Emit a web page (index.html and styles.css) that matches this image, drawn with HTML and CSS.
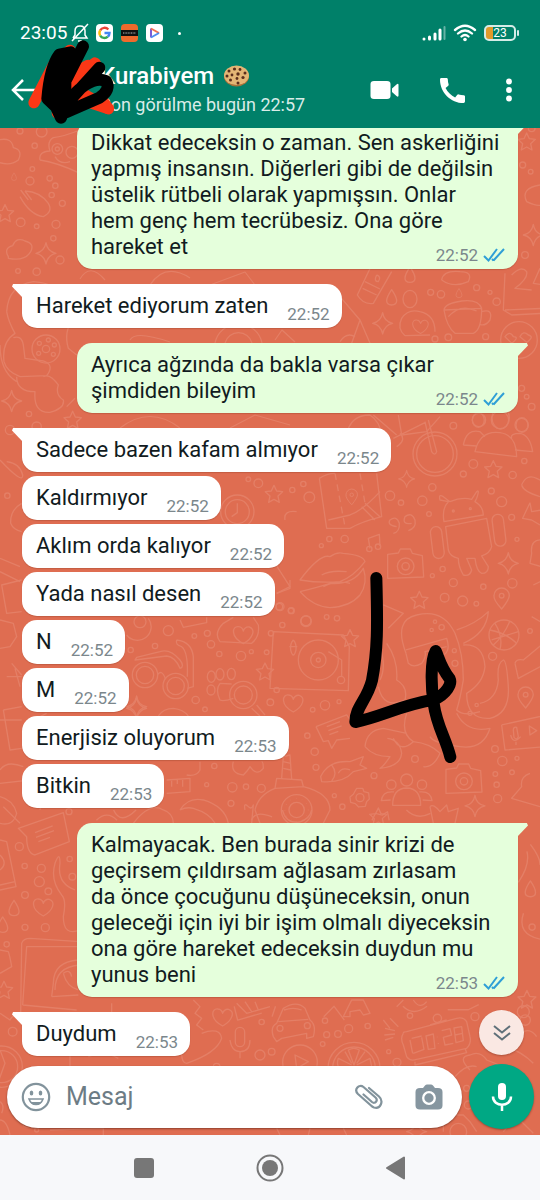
FILE: index.html
```
<!DOCTYPE html>
<html lang="tr">
<head>
<meta charset="utf-8" />
<meta name="viewport" content="width=device-width, initial-scale=1" />
<title>Kurabiyem</title>
<link rel="stylesheet" href="styles.css">
</head>

<body>
<header class="ust">
    <div class="durum">
        <span class="saat">23:05</span>
        <svg class="zil" width="18" height="20" viewBox="0 0 18 20"><path d="M2 15H16L14 12V8Q14 3 9 3Q4 3 4 8V12L2 15M1 18L17 1M7 18H11" /></svg>
        <svg class="app" width="17" height="18" viewBox="0 0 17 18"><rect width="17" height="18" rx="4" fill="#fff" /><g fill="none" stroke-width="2.400"><path d="M12.300 5.500A5 5 0 0 0 4.200 6.400" stroke="#ea4335" /><path d="M4.200 6.400A5 5 0 0 0 4.200 11.600" stroke="#fbbc05" /><path d="M4.200 11.600A5 5 0 0 0 11.800 12.700" stroke="#34a853" /><path d="M11.800 12.700A5 5 0 0 0 13.500 9H8.500" stroke="#4285f4" /></g></svg>
        <svg class="app" width="17" height="18" viewBox="0 0 17 18"><rect width="17" height="18" rx="4" fill="#ef6a2c" /><rect y="6" width="17" height="6" fill="#111" /><path d="M2 9H15" stroke="#bbb" stroke-dasharray="1 .6" /></svg>
        <svg class="app" width="17" height="18" viewBox="0 0 17 18"><rect width="17" height="18" rx="4" fill="#fff" /><g fill="none" stroke-width="2" stroke-linejoin="round"><path d="M5 13.500V4.500" stroke="#7c5cd6" /><path d="M5 4.500L13 9" stroke="#f0704f" /><path d="M13 9L5 13.500" stroke="#4f8df0" /></g></svg>
        <i class="nokta"></i>
        <svg class="sinyal" width="24" height="16" viewBox="0 0 24 16"><g stroke="#fff" stroke-width="3" stroke-linecap="round"><path d="M2 14V14M7.500 14V12M13 14V9M18 14V5" /><path d="M22.500 14V2" stroke-width="2" opacity=".4" /></g></svg>
        <svg class="wifi" width="24" height="18" viewBox="0 0 24 18"><g fill="none" stroke="#fff" stroke-width="2.300" stroke-linecap="round"><path d="M2 6Q12 -2.500 22 6M5 9.500Q12 3.500 19 9.500M8.500 12.500Q12 9.500 15.500 12.500" /></g><circle cx="12" cy="15.500" r="1.800" fill="#fff" /></svg>
        <div class="pil"><span>23</span></div>
    </div>
    <div class="baslik">
        <button class="geri" aria-label="Geri"><svg width="24" height="24" viewBox="0 0 24 24"><path d="M24 12H2M12 2L2 12L12 22" fill="none" stroke="#fff" stroke-width="2.500" /></svg></button>
        <div class="kisi">
            <h1>Kurabiyem
            <svg width="27" height="22" viewBox="0 0 27 22"><ellipse cx="13.500" cy="11.500" rx="12.500" ry="10" fill="#a9713a" /><ellipse cx="13.500" cy="10.300" rx="12.500" ry="9.700" fill="#e3b575" /><g fill="#5a2d1c"><circle cx="6" cy="6" r="1.500" /><circle cx="11.500" cy="4" r="1.600" /><circle cx="17" cy="4.500" r="1.400" /><circle cx="22" cy="8" r="1.500" /><circle cx="15" cy="9" r="1.700" /><circle cx="9" cy="10" r="1.400" /><circle cx="4" cy="11" r="1.500" /><circle cx="20" cy="12.500" r="1.600" /><circle cx="7.500" cy="15" r="1.500" /><circle cx="14" cy="13.500" r="1.400" /><circle cx="15" cy="18" r="1.500" /></g></svg></h1>
            <p>Son görülme bugün 22:57</p>
        </div>
        <div class="islem">
            <button aria-label="Görüntülü ara"><svg width="29" height="20" viewBox="0 0 29 20"><path d="M4 1H17Q20.500 1 20.500 4V16Q20.500 19 17 19H4Q.5 19 .5 16V4Q.5 1 4 1ZM22 8.500L26.500 4.500Q28.500 3 28.500 5V15.500Q28.500 17.500 26.500 16L22 12Z" fill="#fff" /></svg></button>
            <button aria-label="Sesli ara"><svg width="25" height="25" viewBox="3 3 18 18"><path d="M20.010 15.380c-1.230 0-2.420-.2-3.530-.56a.977.977 0 0 0-1.010.24l-1.570 1.970c-2.830-1.350-5.480-3.900-6.890-6.830l1.950-1.660c.27-.28.35-.67.240-1.020-.37-1.110-.56-2.300-.56-3.530 0-.54-.45-.99-.99-.99H4.190C3.650 3 3 3.240 3 3.990 3 13.280 10.730 21 20.010 21c.71 0 .99-.63.99-1.180v-3.450c0-.54-.45-.99-.99-.99z" fill="#fff" /></svg></button>
            <button aria-label="Menü"><svg width="6" height="24" viewBox="0 0 6 24"><g fill="#fff"><circle cx="3" cy="3.500" r="2.900" /><circle cx="3" cy="12" r="2.900" /><circle cx="3" cy="20.500" r="2.900" /></g></svg></button>
        </div>
    </div>
    <svg class="karala" width="96" height="88" viewBox="75 110 288 264">
        <g fill="none" stroke="#fa3716" stroke-width="34" stroke-linecap="round" stroke-linejoin="round"><path d="M102 307L160 195L210 150M215 240L285 188L200 275M325 325L240 275M172 338L220 320" /><path d="M210 225L265 195M325 325L305 298L250 300L325 325" /></g>
        <g fill="#000" stroke="#000" stroke-width="36" stroke-linecap="round" stroke-linejoin="round"><path d="M142 295Q150 200 178 163L212 156L196 240L196 320L183 352L168 320Z" /><path d="M249 138L200 235M298 202L200 310M215 290Q275 225 318 242Q334 268 298 292L200 335" fill="none" /></g>
    </svg>
</header>

<main class="sohbet">
    <svg class="duvar" viewBox="0 128 540 1007" preserveAspectRatio="xMidYMid slice" aria-hidden="true">
        <defs>
            <path id="yildiz" d="M0-26L8-9L26-7L12 6L16 25L0 16L-16 25L-12 6L-26-7L-8-9Z" />
            <path id="parilti" d="M0-32Q4-5 30 0Q5 5 0 32Q-5 5-30 0Q-5-5 0-32Z" />
            <path id="kalp" d="M0 26C-40 5-34-28-14-25Q-3-24 0-12Q5-26 18-24C38-18 30 10 0 26Z" />
            <path id="damla" d="M0-24Q-30 20 0 22Q30 20 0-24Z" />
            <path id="konum" d="M0 32Q-25 5-23-8A23 23 0 1 1 23-8Q22 5 0 32ZM-7-8A7 7 0 1 0 7-8A7 7 0 1 0-7-8" />
            <g id="noktalar"><circle cx="0" cy="0" r="12" /><circle cx="38" cy="12" r="8" /><circle cx="64" cy="-12" r="13" /><circle cx="22" cy="44" r="7" /><circle cx="72" cy="36" r="8" /></g>
            <g id="foto"><path d="M-52-32L-20-36L-14-48H16L22-35L52-28L56 36L-52 40Z" /><circle r="25" cx="2" cy="4" /><circle r="11" cx="2" cy="4" /></g>
            <g id="grup"><circle cx="0" cy="-40" r="18" /><circle cx="-46" cy="-26" r="14" /><circle cx="46" cy="-26" r="14" /><path d="M-42 36Q-42-15 0-16Q42-15 42 36ZM-48 20L-76 22Q-72-8-38-4M48 20L76 22Q72-8 38-4" /></g>
        </defs>
        <!-- sol ust -->
        <g transform="translate(0 125) scale(.3333)">
            <path d="M-10 110Q30 125 55 105Q70 75 40 68Q35 35-5 45M120 105Q115 80 150 78Q140 50 160 38Q190 35 240 15M120 105Q170 112 240 145" />
            <circle cx="172" cy="72" r="16" /><circle cx="216" cy="82" r="18" /><circle cx="172" cy="72" r="6" /><path d="M165 95Q180 120 210 110M62 195L85 225M75 198L95 225M60 215Q90 270 130 275Q160 260 145 235Q120 200 75 198" />
            <path d="M25 395Q10 370 38 362Q50 335 75 348Q105 355 92 380Q75 410 25 400Z" />
            <use href="#damla" x="42" y="155" transform="translate(21 78) scale(.5)" /><use href="#yildiz" x="15" y="265" /><use href="#parilti" x="138" y="385" /><circle cx="97" cy="132" r="7" /><circle cx="90" cy="168" r="12" /><circle cx="149" cy="160" r="8" /><circle cx="166" cy="182" r="8" /><circle cx="62" cy="292" r="13" /><circle cx="110" cy="304" r="7" /><circle cx="160" cy="340" r="8" /><circle cx="180" cy="405" r="12" /><circle cx="110" cy="440" r="11" /><circle cx="54" cy="438" r="7" /><circle cx="104" cy="62" r="8" /><circle cx="125" cy="20" r="16" /><circle cx="60" cy="18" r="9" /><circle cx="155" cy="210" r="8" /><circle cx="187" cy="235" r="9" /><circle cx="168" cy="298" r="12" />
            <path d="M20 560Q25 480 100 470Q180 475 200 530M20 560Q25 590 45 625Q5 650 12 710Q20 740 60 755L140 752Q165 720 130 708L75 700L70 660Q65 630 40 638M50 755Q50 800 105 800Q100 865 150 862Q195 850 190 825Q165 810 175 780Q150 745 130 755M0 660Q0 740 50 770" />
            <circle cx="138" cy="672" r="42" /><circle cx="138" cy="672" r="11" /><circle cx="118" cy="655" r="6" /><circle cx="145" cy="645" r="6" /><circle cx="163" cy="660" r="6" /><circle cx="160" cy="688" r="6" /><circle cx="116" cy="685" r="6" />
            <use href="#parilti" x="35" y="828" /><use href="#yildiz" x="218" y="885" /><circle cx="87" cy="867" r="8" /><circle cx="110" cy="905" r="14" /><path d="M220 580Q190 620 205 670L230 690M225 820L200 845" />
        </g>
        <!-- sag ust -->
        <g transform="translate(330 265) scale(.3333)">
            <path d="M125 0L82 90Q100 120 130 115L185 20M105 50L150 72M98 70L140 90M140 30Q155 35 145 50Q130 50 140 30" />
            <use href="#damla" x="185" y="98" /><use href="#damla" x="240" y="30" /><ellipse cx="240" cy="102" rx="21" ry="26" /><use href="#parilti" x="158" y="175" />
            <path d="M225 212Q200 190 215 160Q235 130 270 140Q315 150 315 200M225 212L300 210M335 45Q370 70 415 50Q430 20 390 20Q340 15 335 45" /><use href="#kalp" x="272" y="185" transform="translate(54 37) scale(.8)" />
            <path d="M342 135Q350 185 375 205H430Q455 195 455 130ZM342 135Q345 115 395 108Q445 102 455 130M355 155Q390 115 440 138M455 140Q490 130 480 165Q465 185 450 178" />
            <path d="M525 25L520 135L545 150L640 145M525 135L640 130M545 30Q575 0 590 20Q595 40 555 70L605 75M630 10L610 55L640 60" />
            <circle cx="567" cy="225" r="55" /><path d="M525 215Q540 195 550 215Q570 215 545 235ZM570 215Q580 195 595 210Q615 215 590 232Z" />
            <circle cx="302" cy="82" r="9" /><circle cx="333" cy="88" r="11" /><use href="#damla" transform="translate(387 85) scale(.6)" /><circle cx="440" cy="68" r="9" /><circle cx="500" cy="110" r="11" /><circle cx="480" cy="82" r="6" /><circle cx="355" cy="217" r="10" /><circle cx="315" cy="222" r="9" /><circle cx="467" cy="215" r="9" /><circle cx="575" cy="370" r="9" /><circle cx="590" cy="395" r="7" /><circle cx="605" cy="425" r="10" />
            <path d="M30 95L90 165L65 235M90 165L120 235M30 230Q50 200 75 215M50 510Q60 450 120 450Q150 470 155 510M130 450L200 510M205 450L215 510L290 500L330 455" /><ellipse cx="445" cy="465" rx="18" ry="22" /><ellipse cx="512" cy="458" rx="26" ry="34" /><ellipse cx="576" cy="480" rx="18" ry="22" />
        </g>
        <g transform="translate(510 125) scale(.3333)"><use href="#yildiz" x="50" y="50" /><circle cx="65" cy="10" r="10" /><circle cx="38" cy="120" r="9" /><circle cx="62" cy="140" r="7" /><path d="M90 180Q30 190 50 230Q80 245 95 240" /><use href="#parilti" x="70" y="330" /><circle cx="45" cy="390" r="10" /></g>
        <path d="M80 279Q90 262 105 280M150 285Q165 262 190 278M210 285L245 272L255 285M130 340Q135 330 170 342M215 343A24 24 0 0 1 262 343M225 343A14 14 0 0 1 252 343M275 340L282 330L295 342M120 428Q150 405 180 428M230 428L255 415L290 425" stroke-width="1.200" />
        <!-- android, ahtapot -->
        <g transform="translate(300 420) scale(.3333)">
            <circle cx="405" cy="102" r="66" /><circle cx="405" cy="102" r="55" /><path d="M375 5L395 95Q405 110 410 95L385 0M280 55L375 8M290 80Q320 60 300 40M490 75Q500 25 540 35L555 50M490 75L530 78M525 95Q540 30 600 38Q650 45 650 110ZM645 90L698 95Q690 45 660 40Q630 40 635 55" /><circle cx="537" cy="0" r="20" /><circle cx="600" cy="0" r="26" /><circle cx="665" cy="15" r="20" />
            <path d="M58 175L80 325L150 325Q185 305 245 290L230 160M58 175Q80 160 105 160M85 300L150 285Q190 270 240 215M185 260L225 300M195 250L240 290" /><path d="M105 160L135 320M180 160L195 250" stroke-dasharray="20 14" /><use href="#konum" x="155" y="230" transform="translate(39 58) scale(.75)" />
            <path d="M432 305Q425 265 445 245L420 240Q415 220 430 230L450 245Q485 230 515 238L530 215Q540 205 530 235L525 245Q550 260 550 285ZM437 320L560 295L575 380Q570 400 545 408L565 440Q565 460 545 460Q530 455 525 415L500 415L515 450Q510 470 490 465Q475 440 475 415Q450 410 445 390Z" /><rect x="395" y="320" width="34" height="96" rx="17" transform="rotate(-7 410 368)" /><rect x="580" y="283" width="34" height="96" rx="17" transform="rotate(-7 595 330)" /><circle cx="460" cy="273" r="3" /><circle cx="511" cy="266" r="3" />
            <path d="M280 340Q300 335 298 310Q290 285 270 300Q260 315 290 320M325 332Q350 325 345 300Q335 275 315 290Q305 315 335 310M210 385L205 355L238 343L240 378" /><circle cx="208" cy="387" r="8" /><circle cx="234" cy="380" r="8" />
            <use href="#foto" x="315" y="435" /><use href="#foto" x="490" y="1080" /><use href="#parilti" x="320" y="177" transform="translate(64 35) scale(.8)" /><use href="#parilti" x="625" y="430" /><use href="#yildiz" x="580" y="148" /><use href="#yildiz" x="358" y="540" /><use href="#konum" x="605" y="535" /><use href="#konum" x="677" y="832" />
            <path d="M665 195Q680 160 710 175L730 185M665 195Q670 215 720 230M690 248L668 295L695 300L720 315M690 248L695 275L725 270M730 360Q690 355 695 400L690 430L725 440M700 495L730 480M695 590L730 610M645 730Q650 715 670 720L730 670M645 730L655 775L730 735" />
            <path d="M0 480Q60 400 90 410Q110 395 130 400Q190 405 195 425Q160 470 120 485Q60 490 0 480ZM0 515Q60 500 90 490Q160 495 190 445Q205 490 180 525Q150 560 90 563Q40 560 0 515M65 465Q90 450 140 455M70 500Q110 480 150 490" />
            <path d="M-80 635L130 645L148 680L145 812L-90 805ZM85 695L125 720V770" /><circle cx="55" cy="720" r="60" /><circle cx="55" cy="720" r="23" /><circle cx="55" cy="720" r="6" /><circle cx="123" cy="780" r="11" /><use href="#yildiz" x="150" y="655" />
            <path d="M318 700Q280 600 350 585Q430 565 465 640Q490 700 490 780Q480 840 470 870Q490 890 540 875M470 630Q530 610 565 575Q560 640 490 670M490 675Q550 670 555 740Q550 790 500 820Q500 900 570 895Q630 880 625 800Q620 720 610 720Q590 730 595 780Q590 840 540 850M470 880Q500 940 570 925Q550 990 480 980Q400 970 390 950M318 700L325 730Q340 745 365 730Q380 710 375 695L440 680M318 690L440 655Q455 700 420 710M320 880Q300 940 340 965Q300 1000 280 955M340 965Q390 970 420 1000Q400 1045 370 1040M260 670Q295 720 290 780Q325 800 315 840Q250 870 235 800M240 680Q260 740 240 780M195 980Q200 930 250 925L320 940M195 980Q220 1010 270 1010Q250 1040 240 1045Q300 1040 305 1000Q300 960 262 955" />
            <circle cx="405" cy="605" r="5" /><circle cx="395" cy="630" r="5" /><circle cx="425" cy="622" r="8" /><circle cx="463" cy="692" r="6" /><circle cx="465" cy="730" r="9" /><circle cx="530" cy="855" r="5" /><circle cx="510" cy="880" r="6" />
            <circle cx="612" cy="645" r="45" /><path d="M570 630Q620 640 650 670M585 610Q610 650 600 688M630 603Q610 650 580 675M655 635L575 660" />
            <path d="M605 915L740 885M605 915L615 990L740 980M640 930Q640 920 650 922L655 950Q650 962 642 952ZM632 945Q640 975 662 950M648 965V975M688 918L710 932L690 945Z" />
            <path d="M48 920L140 885L165 920M48 920L70 965L85 962L95 985L110 960L150 955M80 920L120 905M85 932L125 918M88 944L115 934M62 1070Q85 1020 150 1025L190 1010L180 1035L200 1045L160 1055Q130 1090 65 1085ZM95 1035Q115 1060 95 1083M115 1060Q125 1040 150 1050M250 555L310 580L265 625M690 1060Q660 1070 665 1100L635 1135L720 1160M390 1160Q400 1150 420 1175L440 1155L445 1175L475 1165L465 1210M390 1160L400 1210" />
            <use href="#grup" x="320" y="1120" /><circle cx="180" cy="1133" r="12" /><path d="M170 1105h18l4 10l14 4l2 18l-8 8l-4 14l-20 2l-10-10l-14-4l-2-16l10-8Z" /><use href="#parilti" x="525" y="1158" /><use href="#yildiz" x="235" y="1190" />
            <circle cx="28" cy="232" r="16" /><circle cx="10" cy="192" r="8" /><circle cx="397" cy="202" r="11" /><circle cx="367" cy="242" r="14" /><circle cx="270" cy="227" r="14" /><circle cx="303" cy="248" r="8" /><circle cx="387" cy="282" r="7" /><circle cx="520" cy="132" r="13" /><circle cx="490" cy="162" r="9" /><circle cx="638" cy="165" r="11" /><circle cx="673" cy="123" r="8" /><circle cx="605" cy="245" r="15" /><circle cx="574" cy="213" r="9" /><circle cx="635" cy="292" r="9" /><circle cx="651" cy="358" r="6" /><circle cx="460" cy="488" r="12" /><circle cx="434" cy="533" r="13" /><circle cx="488" cy="543" r="15" /><circle cx="529" cy="551" r="7" /><circle cx="550" cy="500" r="8" /><circle cx="637" cy="490" r="14" /><circle cx="397" cy="467" r="6" /><circle cx="428" cy="447" r="8" /><circle cx="460" cy="17" r="10" /><circle cx="134" cy="357" r="11" /><circle cx="88" cy="357" r="8" /><circle cx="64" cy="377" r="6" /><circle cx="18" cy="604" r="16" /><circle cx="80" cy="591" r="7" /><circle cx="111" cy="595" r="8" /><circle cx="578" cy="709" r="12" /><circle cx="690" cy="633" r="7" /><circle cx="75" cy="856" r="14" /><circle cx="38" cy="869" r="7" /><circle cx="117" cy="845" r="6" /><circle cx="44" cy="995" r="11" /><circle cx="48" cy="1042" r="9" /><circle cx="22" cy="947" r="8" /><circle cx="345" cy="1017" r="10" /><circle cx="585" cy="987" r="10" /><circle cx="607" cy="1023" r="14" /><circle cx="651" cy="1015" r="6" /><circle cx="586" cy="1062" r="7" /><circle cx="590" cy="1094" r="8" /><circle cx="593" cy="1136" r="12" /><circle cx="636" cy="1057" r="7" /><circle cx="222" cy="1067" r="9" /><circle cx="127" cy="1160" r="8" /><circle cx="103" cy="1127" r="6" />
        </g>
        <!-- gozluk, pati -->
        <g transform="translate(100 580) scale(.3333)">
            <circle cx="135" cy="285" r="38" /><circle cx="135" cy="285" r="26" /><circle cx="227" cy="318" r="38" /><circle cx="227" cy="318" r="26" /><path d="M172 285Q185 265 197 298M105 240L200 228Q225 230 240 265Q255 260 240 240Q210 205 180 215L110 232ZM230 180Q275 185 280 230V320L262 325M230 180Q225 195 245 200Q265 215 262 290" />
            <ellipse cx="333" cy="330" rx="12" ry="15" /><ellipse cx="334" cy="290" rx="12" ry="17" /><ellipse cx="360" cy="283" rx="12" ry="17" /><ellipse cx="394" cy="282" rx="12" ry="17" /><path d="M360 310Q345 330 360 360Q370 365 400 355M360 310L395 312M455 385L480 408M470 375L495 405" /><circle cx="430" cy="345" r="41" /><circle cx="430" cy="345" r="27" />
            <path d="M360 185Q340 160 370 130L400 112M360 185L455 190Q480 170 475 135L460 112M80 165A40 40 0 0 0 145 115M240 120L250 142L320 128V112M530 40L570 25V0M175 408Q190 385 220 385Q250 388 265 408" /><use href="#kalp" x="430" y="165" /><circle cx="120" cy="125" r="18" /><use href="#yildiz" x="495" y="275" /><use href="#kalp" x="580" y="370" /><use href="#parilti" x="110" y="380" />
            <path d="M580 180Q570 190 572 210Q580 240 588 210Q590 190 580 180M568 200H592" />
            <path d="M465 690Q475 645 525 625L610 620Q690 640 690 690L670 730M525 625L530 595L605 600L610 620M545 595L550 530L570 525L575 597M550 545L572 550M550 565L572 570M480 730L465 690" /><circle cx="590" cy="690" r="46" /><circle cx="590" cy="690" r="23" /><g stroke-dasharray="1 17"><circle cx="590" cy="690" r="35" /></g>
            <path d="M200 600L270 595V635L200 640M215 600V620M232 600V612M248 600V620M300 545V570Q290 590 260 585M100 730Q150 665 190 690Q220 700 220 730M240 690Q265 650 310 660Q375 680 385 730M240 690Q260 680 280 685Q330 700 345 730M400 545Q390 580 430 585Q445 570 450 560Q470 590 490 565Q490 545 485 545M435 690Q430 665 445 680Q455 690 460 675L455 730" />
            <circle cx="205" cy="152" r="15" /><circle cx="283" cy="168" r="7" /><circle cx="322" cy="160" r="9" /><circle cx="333" cy="193" r="11" /><circle cx="423" cy="228" r="14" /><circle cx="358" cy="222" r="8" /><circle cx="454" cy="215" r="6" /><circle cx="500" cy="217" r="7" /><circle cx="513" cy="160" r="8" /><circle cx="165" cy="198" r="8" /><circle cx="92" cy="210" r="8" /><circle cx="540" cy="80" r="12" /><circle cx="574" cy="92" r="9" /><circle cx="547" cy="135" r="8" /><circle cx="618" cy="122" r="15" /><circle cx="511" cy="367" r="10" /><circle cx="530" cy="330" r="8" /><circle cx="287" cy="360" r="11" /><circle cx="315" cy="388" r="7" /><circle cx="397" cy="622" r="14" /><circle cx="438" cy="620" r="8" /><circle cx="484" cy="625" r="12" /><circle cx="393" cy="670" r="9" /><circle cx="343" cy="558" r="8" /><circle cx="320" cy="614" r="6" />
        </g>
        <g transform="translate(0 420) scale(.3333)"><circle cx="712" cy="275" r="50" /><circle cx="712" cy="275" r="36" /><path d="M712 250V278L695 290M0 120Q70 195 68 165Q60 130 20 125M65 250Q30 270 32 310Q40 330 65 335M0 415L60 440M0 455L60 485M65 480L5 495L20 580L65 575M0 600L40 610L50 650L30 680L0 685M35 730L65 765M20 770L65 770M45 745L60 800M10 870L65 860M10 870L30 990L65 985M0 900H65M100 900L140 880M0 1050Q20 1020 70 1040M0 1090L90 1080Q130 1120 120 1170M855 300Q850 270 890 275M825 430L870 500L830 520" /><use href="#yildiz" x="822" y="222" /><circle cx="775" cy="190" r="13" /><circle cx="745" cy="178" r="7" /><circle cx="877" cy="210" r="8" /><circle cx="838" cy="560" r="10" /><circle cx="873" cy="572" r="8" /><use href="#parilti" x="410" y="865" /><circle cx="22" cy="227" r="8" /><circle cx="30" cy="30" r="14" /></g>
        <!-- sol alt -->
        <g transform="translate(0 800) scale(.3333)">
            <path d="M55 85L190 38L208 125L105 165Q80 160 80 110ZM105 98L158 78M108 112L162 92M115 125L150 112M0 70Q40 80 50 40Q40 0 0-10M10 20L60 70M0 120L20 125L48 260L0 270M0 255L45 245M0 165Q25 190 0 210M240 390Q190 410 190 350Q200 300 185 285Q150 240 165 190Q180 150 180 190Q170 250 225 270M62 640L65 430Q70 415 90 415L240 425M68 615L80 440H240M68 615L230 630M0 450L25 455Q30 470 35 500L0 520" /><path d="M155 590L160 550Q160 485 235 480M155 590L235 585M165 570Q165 500 240 495M190 520Q200 560 235 570M190 520Q210 505 215 530" />
            <use href="#kalp" x="130" y="322" /><use href="#damla" x="42" y="325" /><use href="#damla" x="8" y="375" /><use href="#yildiz" x="12" y="570" /><circle cx="58" cy="140" r="12" /><circle cx="74" cy="198" r="8" /><circle cx="124" cy="205" r="12" /><circle cx="118" cy="245" r="15" /><circle cx="145" cy="274" r="10" /><circle cx="75" cy="285" r="10" /><circle cx="75" cy="382" r="9" /><circle cx="136" cy="383" r="12" /><circle cx="209" cy="177" r="8" /><circle cx="217" cy="230" r="10" /><circle cx="207" cy="35" r="9" /><circle cx="38" cy="695" r="13" /><circle cx="20" cy="433" r="8" />
            <circle cx="5" cy="800" r="62" /><circle cx="5" cy="800" r="48" /><path d="M-5 845L15 790L0 750M0 640L30 660Q40 640 60 650M0 905Q15 915 5 940M150 990L310 985V1005M0 960Q20 960 30 1005" /><circle cx="80" cy="970" r="12" /><circle cx="110" cy="990" r="6" />
            <path d="M210 760V800M265 770Q310 750 355 775M270 640Q300 650 335 640V610M580 600L600 620L585 640L605 655L590 675L610 690M605 700Q660 680 665 715Q650 760 560 790Q545 790 545 760M710 610L740 640L810 620M735 605L755 635M765 605L775 630" /><use href="#kalp" x="668" y="652" /><rect x="706" y="682" width="28" height="58" rx="14" /><path d="M690 720Q695 755 720 755Q750 755 750 720M720 755V775" /><circle cx="785" cy="666" r="8" /><circle cx="780" cy="765" r="15" /><circle cx="650" cy="800" r="10" />
        </g>
        <!-- sag alt -->
        <g transform="translate(270 1000) scale(.3333)">
            <path d="M10 110Q0 80 20 70L40 25Q80 0 105 25L120 60Q140 75 130 110L110 115V100L35 115L20 125ZM25 65L115 58M42 30Q70 20 95 30" /><circle cx="30" cy="85" r="9" /><circle cx="112" cy="77" r="9" />
            <circle cx="90" cy="187" r="52" /><path d="M75 165L115 185L80 205Z" /><circle cx="252" cy="205" r="78" /><circle cx="252" cy="205" r="64" /><path d="M252 195L235 150Q252 140 268 150ZM245 195L205 175Q200 190 205 200M260 195L300 175L305 200M245 190L225 155M260 190L285 155" />
            <path d="M220 50L245 0H280L300 40L280 45L270 30L240 35V50ZM340 60L360 85M360 55L385 80M345 85L375 92M343 105L375 102M345 120L370 112" />
            <path d="M400 100Q390 115 400 135L410 170Q420 185 440 178L590 145Q605 130 600 110L590 65Q580 50 560 55L410 95Q400 95 400 100M435 185V195L590 158L585 145M480 75L530 60" />
            <path d="M425 115L455 108M420 120L428 160M455 112L462 148L430 160M468 108L490 102L495 145L475 148ZM515 92L540 86L545 105L520 112L525 135L550 130M552 84L575 80L580 122L558 128ZM555 105L578 100M502 110V112M505 130V132" />
            <path d="M600 210Q560 170 600 165Q630 150 650 180L700 200M555 230Q590 190 620 200M400 0L380 20M430 0Q450 30 470 5M750 100Q780 80 800 110M700 140Q750 150 790 190M520 395V370L545 345H580L600 365L620 395M700 395L740 350L790 400M20 385L30 405M120 385L115 405M220 385L230 405" /><circle cx="565" cy="395" r="25" /><use href="#parilti" x="440" y="395" /><circle cx="165" cy="62" r="8" /><circle cx="170" cy="104" r="9" /><circle cx="204" cy="102" r="10" /><circle cx="158" cy="132" r="7" /><circle cx="236" cy="86" r="12" /><circle cx="293" cy="78" r="8" /><circle cx="420" cy="47" r="8" /><circle cx="356" cy="155" r="6" /><circle cx="381" cy="187" r="12" /><circle cx="5" cy="155" r="10" /><circle cx="760" cy="35" r="18" /><circle cx="615" cy="50" r="12" /><circle cx="590" cy="265" r="9" /><circle cx="595" cy="315" r="12" />
        </g>
        <g transform="translate(0 810) scale(.3444)"><path d="M280 30Q310 0 340 30M330 0Q350 45 395 0M730 30Q740 0 790 20M820 0Q830 40 870 35Q900 25 905 0M1080 30L1090 10L1110 15L1125 5L1130 30M1180 0Q1210 30 1250 10M1540 100Q1570 140 1568 160M1505 210Q1540 160 1530 120M1520 300Q1500 360 1568 375M680 570L690 610L760 590M800 570L790 600M940 600L970 570L1000 610M1170 570Q1200 600 1240 570M1300 580H1360L1390 565" /><use href="#damla" x="1540" y="230" /><use href="#yildiz" x="1530" y="550" /><circle cx="1545" cy="340" r="9" /><circle cx="1525" cy="610" r="15" /><circle cx="1270" cy="605" r="12" /></g>
    </svg>

    <div class="mesajlar">
        <div class="giden uc"><p>Dikkat edeceksin o zaman. Sen askerliğini<br>yapmış insansın. Diğerleri gibi de değilsin<br>üstelik rütbeli olarak yapmışsın. Onlar<br>hem genç hem tecrübesiz. Ona göre<br>hareket et</p><time>22:52 <svg class="tik" width="22" height="14" viewBox="0 0 22 14"><path d="M1 8L5.500 12.500L14 1M10.500 12.500L21 1M9 11L10.500 12.500" /></svg></time></div>
        <div class="gelen uc"><p>Hareket ediyorum zaten</p><time>22:52</time></div>
        <div class="giden uc"><p>Ayrıca ağzında da bakla varsa çıkar<br>şimdiden bileyim</p><time>22:52 <svg class="tik" width="22" height="14" viewBox="0 0 22 14"><path d="M1 8L5.500 12.500L14 1M10.500 12.500L21 1M9 11L10.500 12.500" /></svg></time></div>
        <div class="gelen uc"><p>Sadece bazen kafam almıyor</p><time>22:52</time></div>
        <div class="gelen"><p>Kaldırmıyor</p><time>22:52</time></div>
        <div class="gelen"><p>Aklım orda kalıyor</p><time>22:52</time></div>
        <div class="gelen"><p>Yada nasıl desen</p><time>22:52</time></div>
        <div class="gelen"><p>N</p><time>22:52</time></div>
        <div class="gelen"><p>M</p><time>22:52</time></div>
        <div class="gelen"><p>Enerjisiz oluyorum</p><time>22:53</time></div>
        <div class="gelen"><p>Bitkin</p><time>22:53</time></div>
        <div class="giden uc"><p>Kalmayacak. Ben burada sinir krizi de<br>geçirsem çıldırsam ağlasam zırlasam<br>da önce çocuğunu düşüneceksin, onun<br>geleceği için iyi bir işim olmalı diyeceksin<br>ona göre hareket edeceksin duydun mu<br>yunus beni</p><time>22:53 <svg class="tik" width="22" height="14" viewBox="0 0 22 14"><path d="M1 8L5.500 12.500L14 1M10.500 12.500L21 1M9 11L10.500 12.500" /></svg></time></div>
        <div class="gelen uc"><p>Duydum</p><time>22:53</time></div>
    </div>

    <form class="yaz">
        <div class="kutu">
            <button type="button" aria-label="Emoji"><svg width="30" height="30" viewBox="0 0 30 30"><circle cx="15" cy="15" r="13.200" fill="none" stroke="#82939c" stroke-width="2.200" /><g fill="#82939c"><ellipse cx="10.500" cy="11" rx="1.800" ry="2.500" /><ellipse cx="19.500" cy="11" rx="1.800" ry="2.500" /></g><path d="M8 17H22Q20 22.500 15 22.500T8 17Z" fill="none" stroke="#82939c" stroke-width="1.600" /><path d="M9 20H21L18 22.500H12Z" fill="#82939c" /></svg></button>
            <input type="text" placeholder="Mesaj" aria-label="Mesaj" />
            <button type="button" aria-label="Ekle"><svg width="30" height="28" viewBox="0 0 30 28"><path d="M15 5L25 13.500C30 18 26.500 26.500 20 24.500Q18.500 24 17 22.500L4 11C-.5 6.500 5 .5 9.500 4L21.500 14.500C24.500 17.500 21 21.500 18 19L9.500 11.500" fill="none" stroke="#82939c" stroke-width="2.200" stroke-linecap="round" /></svg></button>
            <button type="button" aria-label="Kamera"><svg width="28" height="26" viewBox="0 0 28 26"><path d="M5 4H8L10 1.500Q11 .5 12 .5H16Q17 .5 18 1.500L20 4H23Q27.500 4 27.500 8V21.500Q27.500 25.500 23 25.500H5Q.5 25.500 .5 21.500V8Q.5 4 5 4Z" fill="#8696a0" /><circle cx="14" cy="14" r="5.800" fill="#8696a0" stroke="#fff" stroke-width="2.300" /></svg></button>
        </div>
        <button type="button" class="mik" aria-label="Sesli mesaj"><svg width="22" height="28" viewBox="0 0 22 28"><rect x="7" y="0" width="8" height="17" rx="4" fill="#fff" /><path d="M2 13.500C2 24.500 20 24.500 20 13.500M11 21.500V28" fill="none" stroke="#fff" stroke-width="2.500" /></svg></button>
    </form>

    <button class="asagi" aria-label="En alta in"><svg width="18" height="16" viewBox="0 0 18 16"><path d="M1 1L9 7.500L17 1M1 8L9 14.500L17 8" fill="none" stroke="#5f7079" stroke-width="2" /></svg></button>
    <svg class="dort" width="120" height="200" viewBox="140 440 360 600"><path d="M228 473C232 620 232 690 215 780C200 840 165 860 165 905C240 890 300 855 400 838C440 820 455 790 448 775C420 740 415 710 406 692C390 720 392 800 400 850C410 920 435 950 450 1010" fill="none" stroke="#000" stroke-width="36" stroke-linecap="round" stroke-linejoin="round" /></svg>
</main>

<nav class="alt">
    <button aria-label="Son uygulamalar"><svg width="28" height="28" viewBox="0 0 28 28"><rect x="4" y="4" width="20" height="20" rx="3" fill="#777" /></svg></button>
    <button aria-label="Ana ekran"><svg width="28" height="28" viewBox="0 0 28 28"><circle cx="14" cy="14" r="12.500" fill="none" stroke="#777" stroke-width="2" /><circle cx="14" cy="14" r="8" fill="#777" /></svg></button>
    <button aria-label="Geri dön"><svg width="28" height="28" viewBox="0 0 28 28"><path d="M22 3.500V24.500L5 14Z" fill="#777" stroke="#777" stroke-width="2" stroke-linejoin="round" /></svg></button>
</nav>
</body>
</html>
```

FILE: styles.css
```
*{
	margin:0;
	padding:0;
	box-sizing:border-box;}
	body{
		display:flex;
		flex-direction:column;
		height:100vh;
		font-family:Roboto,"Noto Sans",sans-serif;
		background:#f7f8fa;
		color:#111b21;}
	button{
		border:0;
		background:none;
		cursor:pointer;
		display:flex;
		align-items:center;
		justify-content:center;}
	svg{
		display:block;
		flex:none;}
		.ust{
			position:relative;
			z-index:2;
			flex:none;
			background:#008069;
			color:#fff;}
			.durum{
				display:flex;
				align-items:center;
				height:52px;
				padding:14px 24px 0 20px;
				font-size:19px;
				line-height:24px;}
				.zil{
					margin:0 7px 0 4px;
					fill:none;
					stroke:#fff;
					stroke-width:1.5;}
				.app{
					margin-right:8px;}
				.nokta{
					width:3px;
					height:3px;
					border-radius:50%;
					background:#fff;
					margin-left:7px;}
				.sinyal{
					margin-left:auto;}
				.wifi{
					margin:0 7px;}
				.pil{
					position:relative;
					width:32px;
					height:16px;
					border:2px solid #d5ece7;
					border-radius:5px;
					background:linear-gradient(90deg,#e09a2b 7px,transparent 7px);
					font-size:12px;
					line-height:12px;
					text-align:center;}
				.pil:after{
					content:"";
					position:absolute;
					right:-5px;
					top:3px;
					width:2px;
					height:6px;
					border-radius:1px;
					background:#d5ece7;}
			.baslik{
				display:flex;
				align-items:center;
				height:76px;
				padding:0 28px 0 11px;}
				.kisi{
					flex:1;
					margin-left:65px;
					white-space:nowrap;}
				.kisi h1{
					display:flex;
					align-items:center;
					gap:9px;
					font-size:24px;
					font-weight:500;
					line-height:30px;}
				.kisi p{
					font-size:18px;
					line-height:28px;
					color:#d9ece8;}
				.islem{
					display:flex;
					align-items:center;
					gap:41px;}
			.karala{
				position:absolute;
				left:25px;
				top:37px;}
		.sohbet{
			position:relative;
			flex:1;
			min-height:0;
			display:flex;
			flex-direction:column;
			justify-content:flex-end;
			overflow:hidden;
			background:#df6d51;}
			.duvar{
				position:absolute;
				left:0;
				top:0;
				width:100%;
				height:100%;
				fill:none;
				stroke:#e47f66;
				stroke-width:4;
				stroke-linejoin:round;}
			.mesajlar{
				position:relative;
				display:flex;
				flex-direction:column;
				gap:4px;
				padding:0 22px 8px;}
			.gelen,.giden{
				position:relative;
				border-radius:15px;
				font-size:22px;
				line-height:26px;
				white-space:nowrap;
				box-shadow:0 1px 1px rgba(90,30,10,.2);}
			.gelen{
				display:flex;
				gap:19px;
				align-self:flex-start;
				padding:9px 12px 9px 14px;
				background:#fff;}
			.giden{
				display:grid;
				margin-left:55px;
				padding:9px 13px 9px 14px;
				background:#e5ffdc;}
			.giden p,.giden time{
				grid-area:1/1;}
			.giden+.gelen,.gelen+.giden,.giden+.uc,.gelen+.uc{
				margin-top:11px;}
			.gelen time,.giden time{
				display:flex;
				align-items:center;
				gap:5px;
				align-self:end;
				justify-self:end;
				font-size:17px;
				line-height:20px;
				color:#7b878c;
				margin-bottom:-5px;}
			.tik{
				fill:none;
				stroke:#2f9fd6;
				stroke-width:2;}
			.uc:before{
				content:"";
				position:absolute;
				top:0;
				width:11px;
				height:14px;
				background:inherit;}
			.gelen.uc{
				border-top-left-radius:0;}
			.giden.uc{
				border-top-right-radius:0;}
			.gelen.uc:before{
				left:-10px;
				clip-path:polygon(10% 0,100% 0,100% 100%,0 18%);}
			.giden.uc:before{
				right:-10px;
				clip-path:polygon(0 0,90% 0,100% 18%,0 100%);}
			.yaz{
				position:relative;
				display:flex;
				align-items:center;
				gap:7px;
				padding:0 6px 6px 7px;}
				.kutu{
					flex:1;
					min-width:0;
					display:flex;
					align-items:center;
					height:62px;
					padding:0 19px 0 14px;
					border-radius:31px;
					background:#fff;
					box-shadow:0 1px 2px rgba(60,20,10,.5);}
				.kutu input{
					flex:1;
					min-width:0;
					margin:0 16px 0 15px;
					border:0;
					outline:0;
					background:none;
					font:25px/30px Roboto,"Noto Sans",sans-serif;
					color:#111b21;}
				.kutu input::placeholder{
					color:#6d7c85;
					opacity:1;}
				.kutu button+button{
					margin-left:31px;}
				.mik{
					width:65px;
					height:65px;
					border-radius:50%;
					background:#00a884;
					box-shadow:0 1px 2px rgba(60,20,10,.4);}
			.asagi{
				position:absolute;
				right:16px;
				bottom:80px;
				width:45px;
				height:45px;
				border-radius:50%;
				background:#fae8e3;
				box-shadow:0 1px 2px rgba(60,20,10,.3);}
			.dort{
				position:absolute;
				right:73px;
				top:439px;
				pointer-events:none;}
		.alt{
			flex:none;
			display:flex;
			align-items:center;
			justify-content:center;
			gap:98px;
			height:65px;
			background:#f7f8fa;}
```
